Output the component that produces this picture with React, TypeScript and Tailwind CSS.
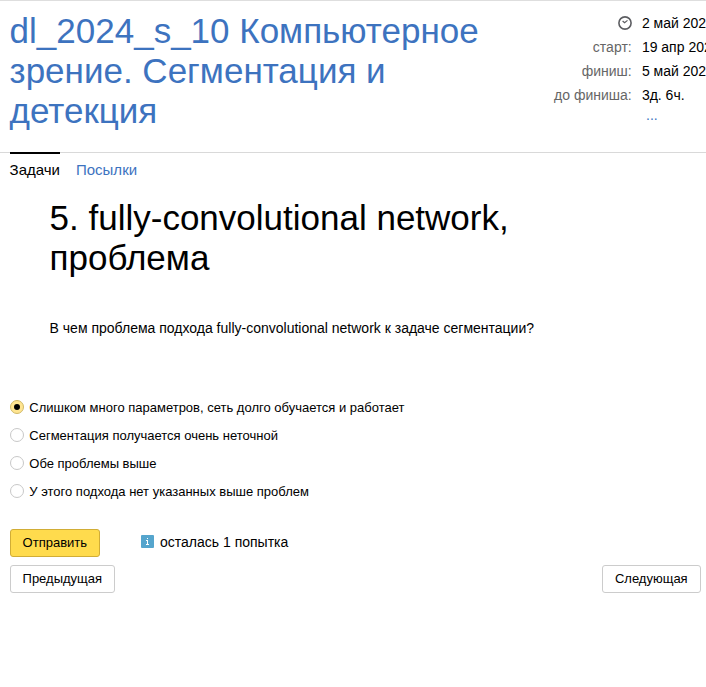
import React from "react";

const facts = [
  ["старт:", "19 апр 202"],
  ["финиш:", "5 май 202"],
  ["до финиша:", "3д. 6ч."],
];

const answers = [
  "Слишком много параметров, сеть долго обучается и работает",
  "Сегментация получается очень неточной",
  "Обе проблемы выше",
  "У этого подхода нет указанных выше проблем",
];

function Radio({ checked }: { checked: boolean }) {
  return (
    <span
      className={
        checked
          ? "mb-[2px] flex size-[14px] shrink-0 items-center justify-center rounded-full border border-[#d0b967] bg-[#ffe591]"
          : "mb-[2px] flex size-[14px] shrink-0 items-center justify-center rounded-full border border-[#c8c8c8] bg-white"
      }
    >
      {checked && <span className="size-[6px] rounded-full bg-black" />}
    </span>
  );
}

export default function App() {
  return (
    <div className="h-[687px] w-[706px] overflow-hidden border-t border-[#dedede] bg-white font-['Liberation_Sans',Arial,sans-serif] text-black">
      <header className="flex h-[151px] justify-between overflow-hidden">
        <h1 className="w-[500px] pt-[10px] pl-[9.6px] text-[35px] leading-[40px] text-[#3d73bf]">
          dl_2024_s_10 Компьютерное зрение. Сегментация и детекция
        </h1>
        <div className="w-[166px] overflow-hidden pt-[10px] text-[14px] leading-[24px] whitespace-nowrap">
          <div className="flex">
            <span className="flex w-[91.7px] shrink-0 items-center justify-end">
              <svg width="14" height="14" viewBox="0 0 14 14" fill="none" stroke="#5c5d61" strokeWidth="1.6">
                <circle cx="7" cy="7" r="6.1" />
                <path d="M4.6 5 6.6 6.8 9.5 4.4" strokeWidth="1.2" />
              </svg>
            </span>
            <span className="ml-[10.2px]">2 май 202</span>
          </div>
          {facts.map(([label, value]) => (
            <div key={label} className="flex">
              <span className="w-[91.7px] shrink-0 text-right text-[#666]">{label}</span>
              <span className="ml-[10.2px]">{value}</span>
            </div>
          ))}
          <div className="pl-[106px] leading-[16px] text-[#3d73bf]">...</div>
        </div>
      </header>
      <nav className="flex gap-4 border-t border-[#d9d9d9] pl-[9.6px] text-[15px] leading-[32px]">
        <span className="-mt-px border-t-2 border-black">Задачи</span>
        <span className="-mt-px border-t-2 border-transparent text-[#3d73bf]">Посылки</span>
      </nav>
      <main>
        <h2 className="mt-[12px] ml-[49.6px] w-[500px] text-[35px] leading-[40px]">
          5. fully-convolutional network, проблема
        </h2>
        <p className="mt-[40px] ml-[49.6px] text-[14px] leading-[20px]">
          В чем проблема подхода fully-convolutional network к задаче сегментации?
        </p>
        <div className="mt-[56px] flex flex-col pl-[10px] text-[13px] leading-[28px]">
          {answers.map((answer, i) => (
            <label key={answer} className="flex h-7 items-center gap-[5.3px]">
              <Radio checked={i === 0} />
              <span>{answer}</span>
            </label>
          ))}
        </div>
        <div className="mt-[23px] flex items-center pl-[10px]">
          <button className="h-7 w-[90px] rounded-[3px] border border-[#d1ad36] bg-[#ffdb4d] pr-[0.4px] text-[13px]">Отправить</button>
          <span className="mb-[3px] ml-[41px] flex size-[13px] items-center justify-center rounded-[1px] bg-[#55a5cd]">
            <svg width="5" height="9" viewBox="0 0 5 9" fill="#fff" shapeRendering="crispEdges">
              <path d="M2 1h1v1H2zM1 3h2v4h1v1H1V7h1V4H1z" />
            </svg>
          </span>
          <span className="mb-[2px] ml-[6px] text-[14px]">осталась 1 попытка</span>
        </div>
        <div className="mt-2 flex justify-between pr-[5px] pl-[10px] text-[13px]">
          <button className="h-7 w-[105px] rounded-[3px] border border-[#ccc] bg-white pr-[0.4px]">Предыдущая</button>
          <button className="h-7 w-[99px] rounded-[3px] border border-[#ccc] bg-white pr-[0.4px]">Следующая</button>
        </div>
      </main>
    </div>
  );
}
